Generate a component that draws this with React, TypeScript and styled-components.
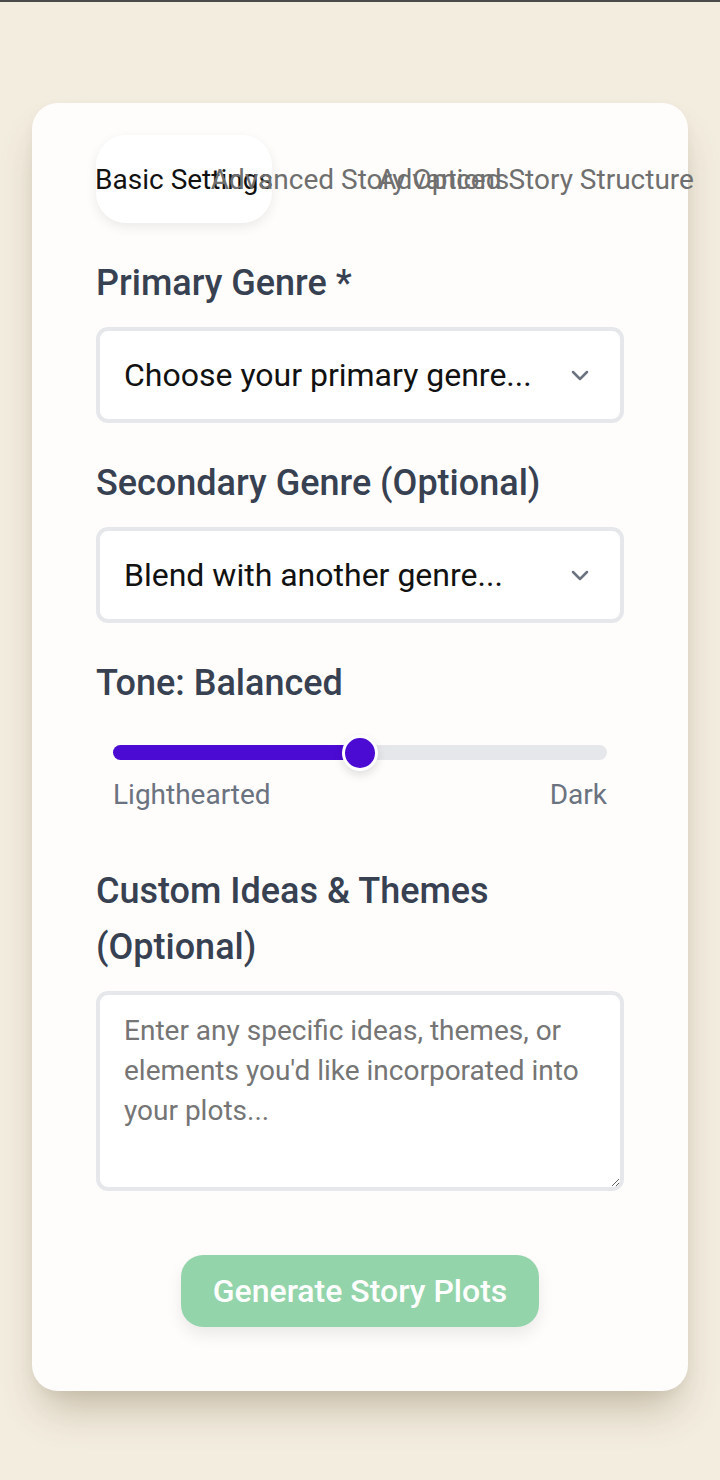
import React from 'react';
import styled, { createGlobalStyle } from 'styled-components';

const GlobalStyle = createGlobalStyle`
  html, body {
    margin: 0;
    padding: 0;
    background-color: #f3ede0;
    font-family: Roboto, "Noto Sans", "Liberation Sans", sans-serif;
  }
  * {
    box-sizing: border-box;
  }
`;

const Page = styled.div`
  min-height: 1480px;
  border-top: 2px solid #4a4a4a;
  padding: 101px 32px 60px;
  overflow: hidden;
`;

const Card = styled.main`
  background-color: #fefdfb;
  border-radius: 26px;
  padding: 32px 64px 64px;
  box-shadow: 0 26px 40px -10px rgba(90, 70, 30, 0.3), 0 4px 12px rgba(0, 0, 0, 0.04);
`;

const Tabs = styled.ul`
  list-style: none;
  margin: 0;
  padding: 0;
  display: grid;
  grid-template-columns: repeat(3, minmax(0, 1fr));
`;

const Tab = styled.li<{ $active?: boolean }>`
  height: 88px;
  display: flex;
  align-items: center;
  justify-content: center;
  white-space: nowrap;
  font-size: 28px;
  font-weight: 400;
  border-radius: 30px;
  color: ${p => (p.$active ? '#111111' : '#6f6f6f')};
  background-color: ${p => (p.$active ? '#ffffff' : 'transparent')};
  box-shadow: ${p => (p.$active ? '0 4px 12px rgba(0, 0, 0, 0.08)' : 'none')};
`;

const Field = styled.section<{ $gap?: number }>`
  margin-top: ${p => p.$gap ?? 32}px;
  display: flex;
  flex-direction: column;
`;

const Label = styled.label`
  font-size: 36px;
  line-height: 56px;
  font-weight: 500;
  color: #374151;
  margin-bottom: 16px;
`;

const SelectBox = styled.div`
  height: 96px;
  border: 4px solid #e5e7eb;
  border-radius: 12px;
  background-color: #ffffff;
  display: flex;
  align-items: center;
  justify-content: space-between;
  padding: 0 28px 0 24px;
  font-size: 32px;
  color: #111111;
`;

const Chevron = styled.svg`
  width: 24px;
  height: 24px;
  color: #6b7280;
`;

const SliderArea = styled.div`
  padding: 18px 17px 0;
`;

const Track = styled.div`
  height: 15px;
  border-radius: 8px;
  background-color: #e5e7eb;
  position: relative;
`;

const Fill = styled.div`
  height: 100%;
  border-radius: 8px;
  background-color: #4b0bd2;
`;

const Thumb = styled.div`
  position: absolute;
  top: 50%;
  width: 36px;
  height: 36px;
  margin: -18px 0 0 -18px;
  border-radius: 50%;
  background-color: #4b0bd2;
  border: 3px solid #ffffff;
  box-shadow: 0 4px 10px rgba(0, 0, 0, 0.12);
`;

const Scale = styled.div`
  display: flex;
  justify-content: space-between;
  margin-top: 15px;
  font-size: 28px;
  line-height: 40px;
  color: #6b7280;
`;

const TextArea = styled.textarea`
  height: 200px;
  border: 4px solid #e5e7eb;
  border-radius: 12px;
  background-color: #ffffff;
  padding: 16px 24px;
  font-family: inherit;
  font-size: 28px;
  line-height: 40px;
  color: #111111;
  &::placeholder {
    color: #757575;
  }
`;

const Actions = styled.div`
  display: flex;
  justify-content: center;
  margin-top: 64px;
`;

const GenerateButton = styled.button`
  width: 358px;
  height: 72px;
  border: none;
  border-radius: 22px;
  background-color: #93d4ab;
  color: #ffffff;
  font-family: inherit;
  font-size: 32px;
  font-weight: 500;
  box-shadow: 0 8px 16px rgba(0, 0, 0, 0.08);
`;

function ChevronDown() {
  return (
    <Chevron viewBox="0 0 24 24" fill="none" stroke="currentColor" strokeWidth={2.5} strokeLinecap="round" strokeLinejoin="round">
      <path d="M5 9l7 7 7-7" />
    </Chevron>
  );
}

export default function App() {
  const tone = 50;
  return (
    <Page>
      <GlobalStyle />
      <Card>
        <Tabs>
          <Tab $active>Basic Settings</Tab>
          <Tab>Advanced Story Options</Tab>
          <Tab>Advanced Story Structure</Tab>
        </Tabs>

        <Field>
          <Label>Primary Genre *</Label>
          <SelectBox>
            <span>Choose your primary genre...</span>
            <ChevronDown />
          </SelectBox>
        </Field>

        <Field>
          <Label>Secondary Genre (Optional)</Label>
          <SelectBox>
            <span>Blend with another genre...</span>
            <ChevronDown />
          </SelectBox>
        </Field>

        <Field>
          <Label>Tone: Balanced</Label>
          <SliderArea>
            <Track>
              <Fill style={{ width: `${tone}%` }} />
              <Thumb style={{ left: `${tone}%` }} />
            </Track>
            <Scale>
              <span>Lighthearted</span>
              <span>Dark</span>
            </Scale>
          </SliderArea>
        </Field>

        <Field $gap={48}>
          <Label>Custom Ideas &amp; Themes (Optional)</Label>
          <TextArea placeholder="Enter any specific ideas, themes, or elements you'd like incorporated into your plots..." />
        </Field>

        <Actions>
          <GenerateButton>Generate Story Plots</GenerateButton>
        </Actions>
      </Card>
    </Page>
  );
}
